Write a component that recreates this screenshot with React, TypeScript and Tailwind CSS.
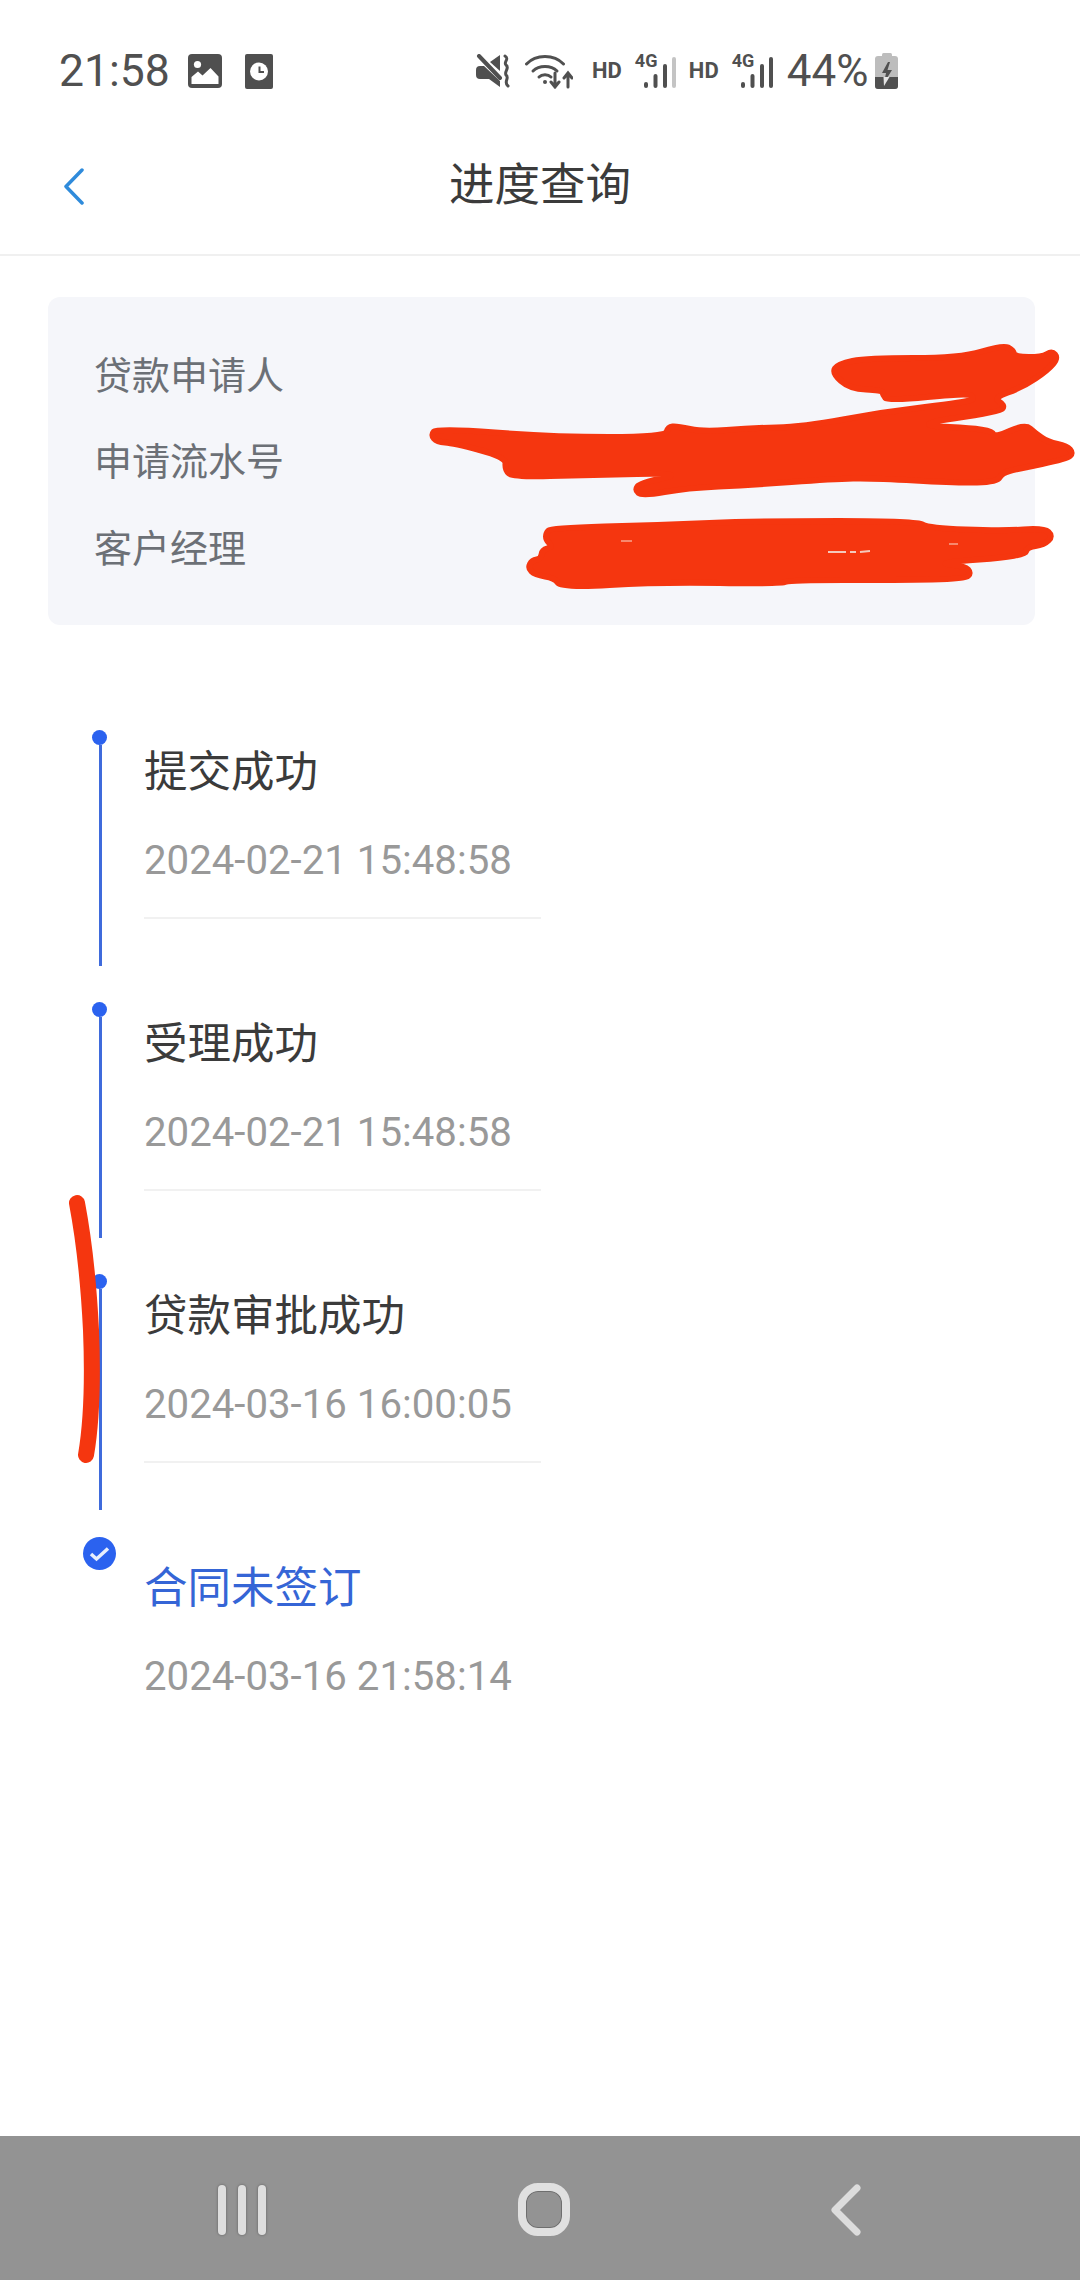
const steps = [
  { title: "提交成功", time: "2024-02-21 15:48:58" },
  { title: "受理成功", time: "2024-02-21 15:48:58" },
  { title: "贷款审批成功", time: "2024-03-16 16:00:05" },
];

const infoRows = ["贷款申请人", "申请流水号", "客户经理"];

// red marker strokes drawn over the private fields
const blobA = [
  [832, 373], [838, 364], [867, 358], [960, 358], [1003, 345], [1013, 350], [1015, 357], [1042, 357], [1052, 351], [1058, 358],
  [1048, 370], [1023, 387], [993, 398], [1005, 405], [1000, 412], [907, 425], [992, 429], [994, 438], [1025, 424], [1035, 433],
  [1048, 442], [1067, 446], [1073, 453], [1067, 459], [1017, 469], [1002, 473], [997, 482], [957, 483], [873, 478], [833, 479],
  [750, 485], [687, 488], [642, 496], [635, 490], [640, 483], [687, 473], [587, 475], [513, 477], [505, 470], [506, 457],
  [453, 443], [437, 442], [431, 435], [437, 428], [553, 437], [665, 437], [668, 427], [677, 426], [703, 432], [750, 428],
  [803, 427], [883, 412], [967, 402], [975, 398], [967, 393], [888, 401], [883, 395], [882, 390], [850, 389],
];
const blobB = [
  [546, 533], [551, 528], [658, 525], [761, 521], [917, 521], [928, 528], [1003, 531], [1044, 528], [1053, 536], [1044, 545],
  [1027, 547], [1025, 556], [934, 563], [965, 566], [971, 573], [965, 579], [899, 580], [789, 580], [782, 584], [658, 582],
  [561, 588], [555, 578], [535, 575], [528, 568], [532, 560], [541, 559], [542, 550], [553, 547], [546, 540],
];

function smooth(pts: number[][]) {
  const mid = (a: number[], b: number[]) => `${(a[0] + b[0]) / 2} ${(a[1] + b[1]) / 2}`;
  let d = `M${mid(pts[pts.length - 1], pts[0])}`;
  pts.forEach((p, i) => {
    d += `Q${p[0]} ${p[1]} ${mid(p, pts[(i + 1) % pts.length])}`;
  });
  return d + "Z";
}

function ImageIcon() {
  return (
    <svg width="34" height="34" viewBox="0 0 34 34" className="shrink-0">
      <rect width="34" height="34" rx="4" fill="#4f4f4f" />
      <circle cx="9.5" cy="10.5" r="3.6" fill="#fff" />
      <path d="M3.5 30V23L10 17.5L14.5 21.5L22.5 14L30.5 22.5V30Z" fill="#fff" />
    </svg>
  );
}

function ClockIcon() {
  return (
    <svg width="28" height="35" viewBox="0 0 28 35" className="shrink-0">
      <rect width="28" height="35" rx="2" fill="#4f4f4f" />
      <circle cx="14" cy="17.5" r="9" fill="#fff" />
      <path d="M14.5 12.5V18H19" fill="none" stroke="#4f4f4f" strokeWidth="2" />
    </svg>
  );
}

function MuteIcon() {
  return (
    <svg width="35" height="34" viewBox="0 0 35 34" className="shrink-0" fill="#505050">
      <path d="M4 12H8L24 27V33L13 25H4A4 4 0 0 1 0 21V16A4 4 0 0 1 4 12Z" />
      <path d="M14 8L24 1V17Z" />
      <path d="M3 2L24 24" stroke="#505050" strokeWidth="4" strokeLinecap="round" />
      <path d="M29 2C34 5 27 8 30 11C34 14 28 17 30 21C34 24 27 28 32 32" fill="none" stroke="#505050" strokeWidth="3" strokeLinecap="round" />
    </svg>
  );
}

function WifiIcon() {
  return (
    <svg width="48" height="35" viewBox="0 0 48 35" className="shrink-0" fill="none" stroke="#505050" strokeLinecap="round">
      <path d="M1.5 10C11 0 29 0 38.5 10" strokeWidth="3" />
      <path d="M8 17C14 11 26 11 32 17" strokeWidth="3" />
      <path d="M14 23C17 20 23 20 26 23" strokeWidth="3" />
      <circle cx="20" cy="28" r="2" fill="#505050" stroke="none" />
      <path d="M30 19V33M26 28L30 33L34 28" strokeWidth="3" />
      <path d="M43 33V19M39 24L43 19L47 24" strokeWidth="3" />
    </svg>
  );
}

function Signal({ full }: { full: boolean }) {
  return (
    <div className="relative h-[36px] w-[42px] shrink-0">
      <span className="absolute -top-[1px] left-0 text-[18px] font-bold leading-[18px] text-[#505050]">4G</span>
      <svg width="42" height="36" viewBox="0 0 42 36">
        <rect x="9" y="29" width="4" height="6" rx="2" fill="#505050" />
        <rect x="18.5" y="21" width="4" height="14" rx="2" fill="#505050" />
        <rect x="28" y="11" width="4" height="24" rx="2" fill="#505050" />
        <rect x="37" y="4" width="4" height="31" rx="2" fill={full ? "#505050" : "#c4c4c4"} />
      </svg>
    </div>
  );
}

function Battery() {
  return (
    <svg width="23" height="36" viewBox="0 0 23 36" className="shrink-0">
      <rect x="7" y="0" width="10" height="5" rx="1.5" fill="#bdbdbd" />
      <rect x="0" y="3" width="23" height="33" rx="3" fill="#bdbdbd" />
      <path d="M0 24H23V33A3 3 0 0 1 20 36H3A3 3 0 0 1 0 33Z" fill="#505050" />
      <path d="M13 9L7 20H11L9 30L17 17H12.5L15 9Z" fill="#505050" />
      <path d="M8.5 24H14.5L9 33Z" fill="#e4e4e4" />
    </svg>
  );
}

function CheckCircle() {
  return (
    <svg width="33" height="33" viewBox="0 0 33 33" className="shrink-0 -mt-[9px]">
      <circle cx="16.5" cy="16.5" r="16.5" fill="#2b62ef" />
      <path d="M8 17L13.5 22L25 11.5" fill="none" stroke="#e8eefc" strokeWidth="3.5" />
    </svg>
  );
}

function Scribbles() {
  return (
    <svg width="1080" height="2280" viewBox="0 0 1080 2280" className="absolute left-0 top-0 pointer-events-none">
      <g fill="#f5360f" stroke="#f5360f" strokeWidth="6" strokeLinejoin="round">
        <path d={smooth(blobA)} />
        <path d={smooth(blobB)} />
      </g>
      <path d="M828 552L846 552M850 552L856 552M860 552L870 551" stroke="#f4c9bc" strokeWidth="2" fill="none" />
      <path d="M621 541L632 541M949 544L958 544" stroke="#f7a58f" strokeWidth="1.5" fill="none" />
      <path d="M77 1203C84 1240 89 1290 91 1330C93 1380 92 1420 86 1455" fill="none" stroke="#f5360f" strokeWidth="16" strokeLinecap="round" />
    </svg>
  );
}

export default function App() {
  return (
    <div className="relative flex h-[2280px] w-[1080px] flex-col overflow-hidden bg-white font-[Roboto,'Noto_Sans_CJK_SC',sans-serif]">
      {/* status bar */}
      <div className="flex h-[108px] items-start pl-[59px] pt-[51px]">
        <div className="flex h-[40px] w-[214px] items-center">
          <span className="text-[44.5px] leading-none text-[#505050]">21:58</span>
          <div className="ml-[18px]"><ImageIcon /></div>
          <div className="ml-[23px]"><ClockIcon /></div>
        </div>
        <div className="ml-[203px] flex h-[40px] items-center">
          <MuteIcon />
          <div className="ml-[14px]"><WifiIcon /></div>
          <span className="ml-[19px] text-[22px] font-bold leading-none text-[#505050]">HD</span>
          <div className="ml-[13px]"><Signal full={false} /></div>
          <span className="ml-[12px] text-[22px] font-bold leading-none text-[#505050]">HD</span>
          <div className="ml-[13px]"><Signal full /></div>
          <span className="ml-[13px] text-[44px] leading-none text-[#505050]">44%</span>
          <div className="ml-[7px]"><Battery /></div>
        </div>
      </div>

      {/* nav */}
      <div className="grid h-[148px] shrink-0 grid-cols-[1fr_auto_1fr] items-center border-b-2 border-[#f0f0f0] pt-[10px]">
        <div className="flex items-center pl-[64px]">
          <svg width="20" height="37" viewBox="0 0 20 37" fill="none" stroke="#2f8bdb" strokeWidth="3.5" strokeLinecap="round" strokeLinejoin="round">
            <path d="M18 2L2 18.5L18 35" />
          </svg>
        </div>
        <span className="text-[45.5px] leading-none text-[#3b3b3b]">进度查询</span>
        <div />
      </div>

      {/* info card */}
      <div className="ml-[48px] mt-[41px] flex h-[328px] w-[987px] flex-col justify-center rounded-[12px] bg-[#f5f6fa] pl-[46px] pt-[3px]">
        {infoRows.map((r) => (
          <div key={r} className="flex h-[86.5px] items-center text-[38px] text-[#6c7076]">{r}</div>
        ))}
      </div>

      {/* timeline */}
      <div className="mt-[105px] pl-[92px]">
        {steps.map((s) => (
          <div key={s.title} className="flex h-[272px]">
            <div className="flex w-[15px] flex-col items-center pb-[36px]">
              <div className="h-[15px] w-[15px] shrink-0 rounded-full bg-[#2b62ef]" />
              <div className="ml-[2px] w-[3px] flex-1 bg-[#3f6bdc]" />
            </div>
            <div className="ml-[37px] w-[397px] pt-[13px]">
              <div className="h-[60px] text-[43.5px] leading-[60px] text-[#3b3b3b]">{s.title}</div>
              <div className="mt-[28px] h-[60px] text-[40.2px] leading-[60px] text-[#999]">{s.time}</div>
              <div className="mt-[26px] h-[2px] bg-[#f1f1f1]" />
            </div>
          </div>
        ))}
        <div className="flex">
          <div className="flex w-[15px] flex-col items-center">
            <CheckCircle />
          </div>
          <div className="ml-[37px] w-[397px] pt-[13px]">
            <div className="h-[60px] text-[43.5px] leading-[60px] text-[#3565d6]">合同未签订</div>
            <div className="mt-[28px] h-[60px] text-[40.2px] leading-[60px] text-[#999]">2024-03-16 21:58:14</div>
          </div>
        </div>
      </div>

      {/* system nav */}
      <div className="mt-auto grid h-[144px] grid-cols-[repeat(3,302px)] items-center bg-[#939393] pl-[91px] pt-[3px]">
        <div className="flex justify-center gap-[12px]">
          <div className="h-[50px] w-[8px] rounded-full bg-[#dedede] shadow-[0_0_2px_1px_#7a7a7a]" />
          <div className="h-[50px] w-[8px] rounded-full bg-[#dedede] shadow-[0_0_2px_1px_#7a7a7a]" />
          <div className="h-[50px] w-[8px] rounded-full bg-[#dedede] shadow-[0_0_2px_1px_#7a7a7a]" />
        </div>
        <div className="flex justify-center">
          <div className="h-[53px] w-[52px] rounded-[20px] border-[8px] border-[#e0e0e0] shadow-[inset_0_0_0_1px_#6e6e6e]" />
        </div>
        <div className="flex justify-center">
          <svg width="30" height="52" viewBox="0 0 30 52" fill="none" stroke="#dcdcdc" strokeWidth="7" strokeLinecap="round" strokeLinejoin="round">
            <path d="M26 4L4 26L26 48" />
          </svg>
        </div>
      </div>

      <Scribbles />
    </div>
  );
}
